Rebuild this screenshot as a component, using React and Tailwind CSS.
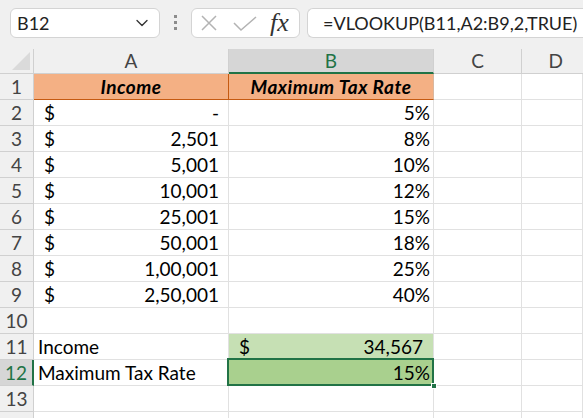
import { ChevronDown } from "lucide-react";

const font = { fontFamily: "Lato, 'Liberation Sans', sans-serif" };

const rows = [
  ["-", "5%"],
  ["2,501", "8%"],
  ["5,001", "10%"],
  ["10,001", "12%"],
  ["25,001", "15%"],
  ["50,001", "18%"],
  ["1,00,001", "25%"],
  ["2,50,001", "40%"],
];

const grid = "grid grid-cols-[34px_195px_205px_88px_1fr]";
const cell = "h-[26px] border-r border-b border-[#e1e1e1] bg-white text-[19px] leading-[25px] text-black";

function RowHead({ n, active }) {
  return (
    <div
      className={
        active
          ? "h-[26px] border-r-2 border-b border-r-[#217346] border-b-[#d0d0d0] bg-[#d6d6d6] text-center text-[19px] leading-[25px] text-[#217346]"
          : "h-[26px] border-r border-b border-[#d0d0d0] bg-[#f0f0f0] text-center text-[19px] leading-[25px] text-[#444]"
      }
    >
      {n}
    </div>
  );
}

function Toolbar() {
  return (
    <div className="flex h-[49px] items-start bg-[#f0f0f0] pt-[8px]">
      <div className="ml-[10px] flex h-[30px] w-[150px] items-center justify-between rounded-[6px] border border-[#d4d4d4] bg-white pl-[6px] pr-[7px]">
        <span className="text-[18px] text-[#222]">B12</span>
        <ChevronDown size={20} strokeWidth={1.6} className="text-[#333]" />
      </div>
      <div className="ml-[14px] mt-[7px] flex w-[4px] flex-col gap-[3px]">
        <span className="h-[3px] w-[3px] bg-[#8c8c8c]" />
        <span className="h-[3px] w-[3px] bg-[#8c8c8c]" />
        <span className="h-[3px] w-[3px] bg-[#8c8c8c]" />
      </div>
      <div className="ml-[13px] flex h-[30px] w-[109px] items-center rounded-[6px] border border-[#d4d4d4] bg-white pl-[8px]">
        <svg width="18" height="18" viewBox="0 0 18 18" className="text-[#b3b3b3]">
          <path d="M2 2 L16 16 M16 2 L2 16" stroke="currentColor" strokeWidth="1.5" fill="none" />
        </svg>
        <svg width="26" height="18" viewBox="0 0 26 18" className="ml-[14px] text-[#b3b3b3]">
          <path d="M2 9 L9 16 L24 3" stroke="currentColor" strokeWidth="1.5" fill="none" />
        </svg>
        <span
          className="ml-[12px] text-[26px] italic leading-none text-[#333]"
          style={{ fontFamily: "'Liberation Serif', serif" }}
        >
          fx
        </span>
      </div>
      <div className="ml-[7px] flex h-[30px] flex-1 items-center rounded-l-[6px] border border-r-0 border-[#d4d4d4] bg-white pl-[15px]">
        <span className="text-[18px] text-[#222]">=VLOOKUP(B11,A2:B9,2,TRUE)</span>
      </div>
    </div>
  );
}

export default function App() {
  return (
    <div className="h-[418px] w-[583px] overflow-hidden bg-white" style={font}>
      <Toolbar />

      <div className={grid}>
        <div className="relative h-[25px] border-r border-b border-[#d0d0d0] bg-[#f0f0f0]">
          <svg width="20" height="20" viewBox="0 0 20 20" className="absolute left-[11px] top-[2px]">
            <path d="M19 1 L19 19 L1 19 Z" fill="#dadada" />
          </svg>
        </div>
        <div className="h-[25px] border-r border-b border-[#d0d0d0] bg-[#f0f0f0] text-center text-[19px] leading-[24px] text-[#444]">A</div>
        <div className="h-[25px] border-r border-b-2 border-r-[#d0d0d0] border-b-[#217346] bg-[#d6d6d6] text-center text-[19px] leading-[24px] text-[#217346]">B</div>
        <div className="h-[25px] border-r border-b border-[#d0d0d0] bg-[#f0f0f0] text-center text-[19px] leading-[24px] text-[#444]">C</div>
        <div className="h-[25px] border-b border-[#d0d0d0] bg-[#f0f0f0] pr-[20px] text-right text-[19px] leading-[24px] text-[#444]">D</div>

        <RowHead n={1} />
        <div className="h-[26px] border-r border-b border-r-[#c55a11] border-b-[#c55a11] bg-[#f4b084] text-center text-[19px] font-bold italic leading-[25px] tracking-[0.5px] text-black">Income</div>
        <div className="h-[26px] border-r border-b border-r-[#d9b79f] border-b-[#c55a11] bg-[#f4b084] text-center text-[19px] font-bold italic leading-[25px] tracking-[0.5px] text-black">Maximum Tax Rate</div>
        <div className={cell} />
        <div className={cell} />

        {rows.map(([income, rate], i) => (
          <div key={i} className="contents">
            <RowHead n={i + 2} />
            <div className={`${cell} flex justify-between pl-[10px] pr-[9px]`}>
              <span>$</span>
              <span>{income}</span>
            </div>
            <div className={`${cell} pr-[3px] text-right`}>{rate}</div>
            <div className={cell} />
            <div className={cell} />
          </div>
        ))}

        <RowHead n={10} />
        <div className={cell} />
        <div className={cell} />
        <div className={cell} />
        <div className={cell} />

        <RowHead n={11} />
        <div className={`${cell} pl-[4px]`}>Income</div>
        <div className={`${cell} flex justify-between !bg-[#c6e0b4] pl-[10px] pr-[10px]`}>
          <span>$</span>
          <span>34,567</span>
        </div>
        <div className={cell} />
        <div className={cell} />

        <RowHead n={12} active />
        <div className={`${cell} pl-[4px]`}>Maximum Tax Rate</div>
        <div className={`${cell} relative !bg-[#a9d08e] pr-[3px] text-right`}>
          15%
          <div className="pointer-events-none absolute -left-[2px] -top-[2px] -right-[1px] -bottom-[1px] border-2 border-[#217346]" />
          <div className="absolute -bottom-[4px] -right-[4px] h-[6px] w-[6px] border border-white bg-[#217346]" />
        </div>
        <div className={cell} />
        <div className={cell} />

        <RowHead n={13} />
        <div className={cell} />
        <div className={cell} />
        <div className={cell} />
        <div className={cell} />

        <div className="h-[26px] border-r border-[#d0d0d0] bg-[#f0f0f0]" />
        <div className={cell} />
        <div className={cell} />
        <div className={cell} />
        <div className={cell} />
      </div>
    </div>
  );
}
